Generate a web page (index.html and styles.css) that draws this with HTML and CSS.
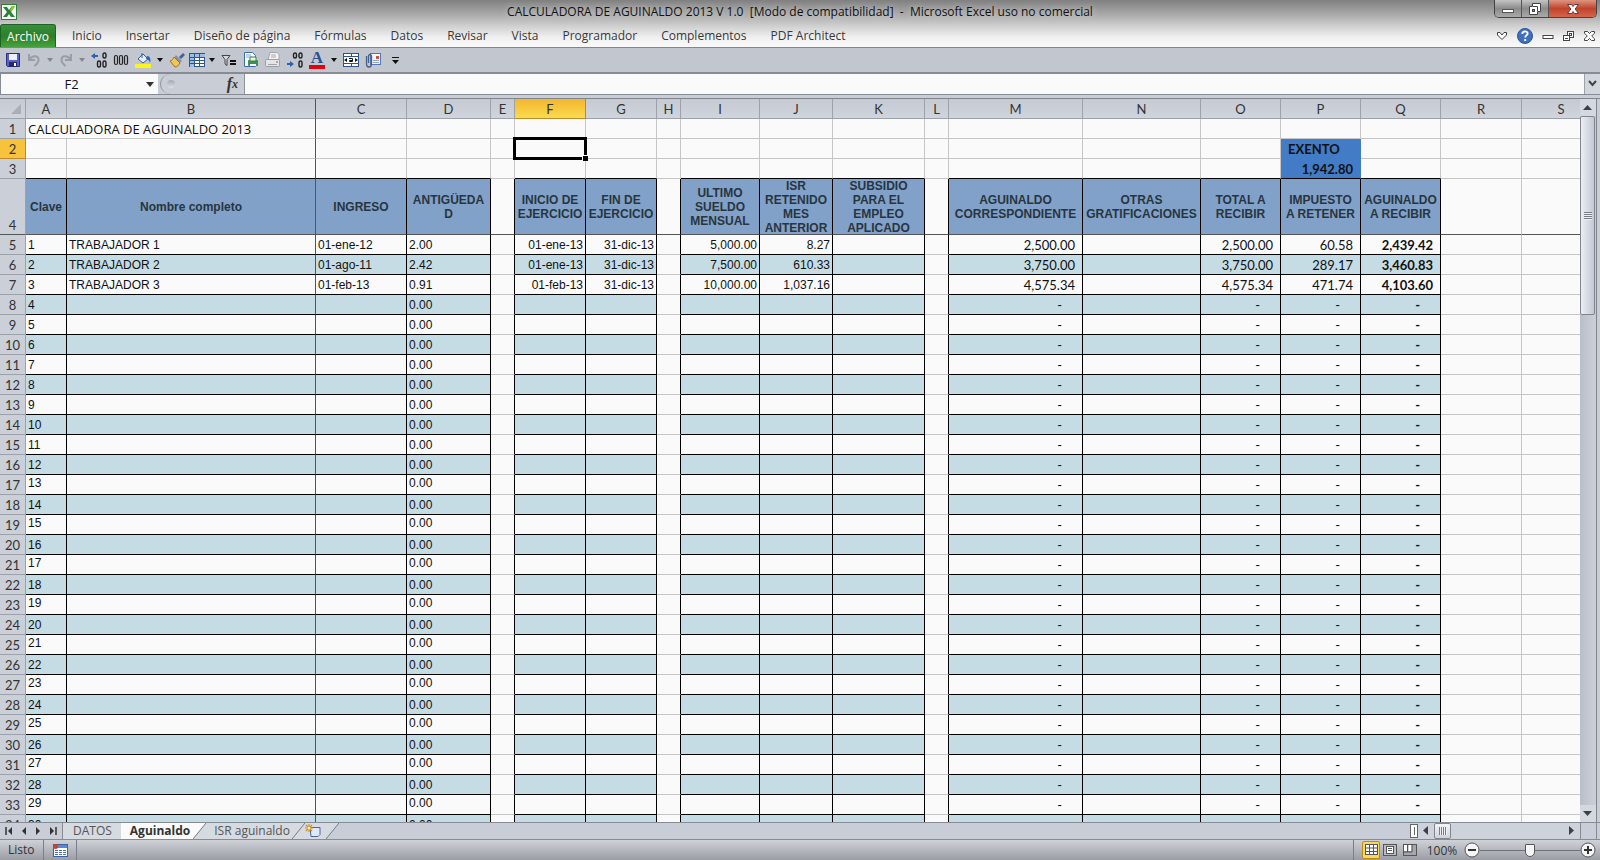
FILE: index.html
```
<!DOCTYPE html>
<html lang="es">
<head>
    <meta charset="UTF-8">
    <meta name="viewport" content="width=device-width, initial-scale=1.0">
    <title>CALCULADORA DE AGUINALDO 2013 V 1.0</title>
    <link rel="stylesheet" href="styles.css">
</head>
<body>
    <header class="top">
        <div class="titlebar">
            <svg class="app-icon" width="18" height="18" viewBox="0 0 18 18">
                <rect x="1.5" y="1.5" width="15" height="15" fill="#f4faf2" stroke="#2f7d3a"/>
                <path d="M3 4h4l2 3 3-4h3l-4 6 4 5h-4l-2-3-2 3H3l4-5z" fill="#2a8038"/>
                <path d="M12 3h3l-4 6-1-2z" fill="#8cc63f"/>
            </svg>
            <h1>CALCULADORA DE AGUINALDO 2013 V 1.0&nbsp; [Modo de compatibilidad]&nbsp; -&nbsp; Microsoft Excel uso no comercial</h1>
            <div class="window-buttons">
                <button aria-label="Minimizar"><svg width="14" height="14" viewBox="0 0 14 14"><rect x="1.5" y="7.5" width="11" height="3" fill="#fff" stroke="#555"/></svg></button>
                <button aria-label="Restaurar"><svg width="14" height="14" viewBox="0 0 14 14"><path d="M4.5 1.5h8v8h-3v3h-8v-8h3z" fill="#fff" stroke="#444"/><path d="M9.5 9V4.5H5" fill="none" stroke="#444"/><rect x="4.5" y="7.5" width="2" height="2" fill="#888" stroke="#444"/></svg></button>
                <button class="close" aria-label="Cerrar"><svg width="14" height="14" viewBox="0 0 14 14"><path d="M1.5 2.5h4L7 4.5l1.5-2h4L9.2 7l3.300 4.500h-4L7 9.500l-1.500 2h-4L4.800 7z" fill="#fff" stroke="#6a3a3a"/></svg></button>
            </div>
        </div>
        <nav class="tabs">
            <button class="file">Archivo</button>
            <button>Inicio</button>
            <button>Insertar</button>
            <button>Diseño de página</button>
            <button>Fórmulas</button>
            <button>Datos</button>
            <button>Revisar</button>
            <button>Vista</button>
            <button>Programador</button>
            <button>Complementos</button>
            <button>PDF Architect</button>
            <div class="book-buttons">
                <button aria-label="Minimizar la cinta"><svg width="12" height="12" viewBox="0 0 12 12"><path d="M1.5 2.5h2.500L6 5l2-2.500h2.500V5L6 9.500 1.500 5z" fill="#fff" stroke="#444"/></svg></button>
                <button aria-label="Ayuda"><svg width="18" height="18" viewBox="0 0 18 18"><circle cx="9" cy="9" r="7.5" fill="#3f6fbd" stroke="#2b559b"/><path d="M6.300 7c0-3.500 5.400-3.300 5.400-.5 0 1.800-2.500 1.800-2.500 4" fill="none" stroke="#fff" stroke-width="1.8"/><rect x="8.2" y="12" width="2" height="2" fill="#fff"/></svg></button>
                <button aria-label="Minimizar libro"><svg width="12" height="12" viewBox="0 0 12 12"><rect x="1" y="5.5" width="10" height="3" fill="#fff" stroke="#444"/></svg></button>
                <button aria-label="Restaurar libro"><svg width="13" height="12" viewBox="0 0 13 12"><rect x="5.5" y="1.5" width="6" height="6" fill="#fff" stroke="#444"/><rect x="7.5" y="3.5" width="2" height="2" fill="#fff" stroke="#444"/><rect x="1.5" y="5.5" width="6" height="5" fill="#fff" stroke="#444"/><path d="M3 8.5h3" stroke="#444"/></svg></button>
                <button aria-label="Cerrar libro"><svg width="13" height="12" viewBox="0 0 13 12"><path d="M1.5 1.5h3l2 2 2-2h3v1.700L8.700 6l2.800 2.800v1.700h-3l-2-2-2 2h-3V8.800L4.300 6 1.500 3.200z" fill="#fff" stroke="#444"/></svg></button>
            </div>
        </nav>
    </header>

    <div class="toolbar">
        <button class="wide" aria-label="Guardar"><svg width="16" height="16" viewBox="0 0 16 16"><path d="M1.5 1.5h13v13h-12l-1-1z" fill="#5a62c4" stroke="#2b2f86"/><rect x="4" y="2" width="8" height="6" fill="#eef0fb"/><rect x="4" y="10" width="8" height="5" fill="#23286f"/><rect x="9" y="11" width="2" height="3" fill="#fff"/></svg></button>
        <button aria-label="Deshacer"><svg width="16" height="16" viewBox="0 0 16 16"><path d="M3 2v6h6M3.500 7.500C6 3 13 3 12.500 8c0 2-1.500 4-4 6" fill="none" stroke="#9a9da6" stroke-width="2"/></svg></button>
        <button class="drop dim" aria-label="Lista deshacer"><svg width="6" height="4" viewBox="0 0 6 4"><path d="M0 0h6L3 4z"/></svg></button>
        <button aria-label="Rehacer"><svg width="16" height="16" viewBox="0 0 16 16"><path d="M13 2v6H7M12.500 7.500C10 3 3 3 3.500 8c0 2 1.500 4 4 6" fill="none" stroke="#9a9da6" stroke-width="2"/></svg></button>
        <button class="drop dim" aria-label="Lista rehacer"><svg width="6" height="4" viewBox="0 0 6 4"><path d="M0 0h6L3 4z"/></svg></button>
        <button class="wide" aria-label="Aumentar decimales"><svg width="16" height="16" viewBox="0 0 16 16"><path d="M0 4l4-3v2h3v2H4v2z" fill="#2c62b4"/><g fill="none" stroke="#222" stroke-width="1.4"><rect x="12" y="1" width="3" height="5" rx="1.5"/><rect x="6.5" y="9" width="3" height="6" rx="1.5"/><rect x="12" y="9" width="3" height="6" rx="1.5"/></g></svg></button>
        <button class="wide" aria-label="Estilo millares"><svg width="16" height="16" viewBox="0 0 16 16"><g fill="none" stroke="#222" stroke-width="1.2"><rect x="1.5" y="3.5" width="3" height="9" rx="1.5"/><rect x="6.5" y="3.5" width="3" height="9" rx="1.5"/><rect x="11.5" y="3.5" width="3" height="9" rx="1.5"/></g></svg></button>
        <button class="wide" aria-label="Color de relleno"><svg width="18" height="16" viewBox="0 0 18 16"><rect x="1" y="12" width="16" height="4" fill="#fdf51a"/><path d="M4 7l5-5 5 5-5 4z" fill="#e6edf7" stroke="#3a5f94"/><path d="M8 6V1" stroke="#3a5f94"/><path d="M13 4c3 0 4 3 3 7-1-3-2-4-4-4z" fill="#2b62b3"/></svg></button>
        <button class="drop" aria-label="Lista de colores de relleno"><svg width="6" height="4" viewBox="0 0 6 4"><path d="M0 0h6L3 4z"/></svg></button>
        <button class="wide" aria-label="Copiar formato"><svg width="16" height="16" viewBox="0 0 16 16"><path d="M10 5l4-4 2 2-4 4z" fill="#4a5b9b"/><path d="M7 3l6 6-2 2-6-5z" fill="#8c8fa8"/><path d="M5 5l6 6c-1 2-3 4-5 4L1 9c2 0 3-2 4-4z" fill="#eec65a" stroke="#9b7420"/></svg></button>
        <button class="grid-tool" aria-label="Dar formato como tabla"><svg width="16" height="16" viewBox="0 0 16 16"><rect x=".5" y="1.5" width="15" height="13" fill="#fff" stroke="#2c5688"/><path d="M1 2h15v3H1zM1 5h4v10H1z" fill="#9dbde6"/><path d="M.5 5.5h15M.5 8.500h15M.5 11.500h15M5.500 1v14M10.500 1v14" stroke="#2c5688"/></svg></button>
        <button class="drop" aria-label="Lista de tablas"><svg width="6" height="4" viewBox="0 0 6 4"><path d="M0 0h6L3 4z"/></svg></button>
        <button class="wide" aria-label="Filtro"><svg width="16" height="16" viewBox="0 0 16 16"><path d="M1 3.500h8L6 7.500v6L4 12V7.500z" fill="#d5d8de" stroke="#444"/><path d="M9 8h6v2H9zM9 11h6v2H9z" fill="#111"/></svg></button>
        <button class="wide" aria-label="Vista preliminar"><svg width="16" height="16" viewBox="0 0 16 16"><path d="M1.500.5h8l3 3v11h-11z" fill="#fff" stroke="#3c6cab"/><path d="M3 3h5M3 5h6" stroke="#7da5d8"/><rect x="5" y="8" width="10" height="6" rx="1" fill="#3f9150"/><path d="M7 5h6v4H7z" fill="#e9f5ea" stroke="#3f7f4c"/><path d="M7 12h6v2H7z" fill="#fff"/></svg></button>
        <button class="wide" aria-label="Impresión rápida"><svg width="16" height="16" viewBox="0 0 16 16"><path d="M5 .5h7l2 2V8H3z" fill="#f4f4f5" stroke="#a4a6ac"/><rect x=".5" y="7.500" width="14" height="7" rx="1" fill="#e4e5e8" stroke="#9c9ea5"/><path d="M3 12.500h9M6 3h5M6 5h5" stroke="#a4a6ac"/><circle cx="12" cy="10" r="1" fill="#cf7d78"/></svg></button>
        <button class="wide" aria-label="Disminuir decimales"><svg width="16" height="16" viewBox="0 0 16 16"><path d="M7 12l-4 3v-2H0v-2h3V9z" fill="#2c62b4"/><g fill="none" stroke="#222" stroke-width="1.4"><rect x="6.5" y="1" width="3" height="5" rx="1.5"/><rect x="12" y="1" width="3" height="5" rx="1.5"/><rect x="12" y="9" width="3" height="6" rx="1.5"/></g></svg></button>
        <button class="wide font-color" aria-label="Color de fuente">A</button>
        <button class="drop" aria-label="Lista de colores de fuente"><svg width="6" height="4" viewBox="0 0 6 4"><path d="M0 0h6L3 4z"/></svg></button>
        <button class="wide" aria-label="Combinar y centrar"><svg width="16" height="16" viewBox="0 0 16 16"><rect x=".5" y="1.5" width="15" height="13" fill="#fff" stroke="#2c5688"/><path d="M.5 4.500h15M.5 11.500h15M8.500 1v3M8.500 12v3" stroke="#2c5688"/><path d="M1 8l3-2v4zM15 8l-3-2v4z" fill="#111"/><path d="M6 6.500h3.500v3H6.500V8.500h3" fill="none" stroke="#111"/></svg></button>
        <button class="wide" aria-label="Adjuntar"><svg width="16" height="16" viewBox="0 0 16 16"><rect x="5.5" y="1.5" width="10" height="11" fill="#f1f5fc" stroke="#5478ad"/><path d="M8 10.500h6M8 8.500h6" stroke="#8aa5d0"/><rect x="11" y="4" width="3" height="3" fill="#c8554a"/><path d="M1.500 4v8c0 4 5 4 5 0V4c0-2-3-2-3 0v7" fill="none" stroke="#4b5f87" stroke-width="1.3"/></svg></button>
        <button class="wide" aria-label="Personalizar barra"><svg width="10" height="10" viewBox="0 0 10 10"><path d="M2 2.500h7" stroke="#111"/><path d="M2 5h7L5.500 9z" fill="#111"/></svg></button>
    </div>

    <div class="formula-bar">
        <input class="name-box" type="text" value="F2" aria-label="Cuadro de nombres">
        <button class="name-drop" aria-label="Lista de nombres"><svg width="8" height="5" viewBox="0 0 8 5"><path d="M0 0h8L4 5z" fill="#333"/></svg></button>
        <div class="fx">
            <span class="knob"></span>
            <button aria-label="Insertar función"><i>f</i><i class="sub">x</i></button>
        </div>
        <input class="formula" type="text" aria-label="Barra de fórmulas">
        <button class="expand" aria-label="Expandir"><svg width="9" height="8" viewBox="0 0 9 8"><path d="M1 1l3.500 4L8 1" fill="none" stroke="#444" stroke-width="2"/></svg></button>
    </div>

    <main class="sheet">
        <div class="grid-view">
            <table>
                <colgroup id="cols"></colgroup>
                <thead>
                    <tr id="letters"></tr>
                </thead>
                <tbody id="cells"></tbody>
            </table>
        </div>
        <div class="vscroll">
            <button aria-label="Subir"><svg width="10" height="6" viewBox="0 0 10 6"><path d="M0 5h9L4.500 0z" fill="#3c4048"/></svg></button>
            <div class="vthumb"><span></span></div>
            <div class="vtrack"></div>
            <button aria-label="Bajar"><svg width="10" height="6" viewBox="0 0 10 6"><path d="M0 0h9L4.500 5z" fill="#3c4048"/></svg></button>
        </div>
    </main>

    <div class="sheet-bar">
        <div class="nav-buttons">
            <button aria-label="Primera hoja"><svg width="8" height="8" viewBox="0 0 8 8"><path d="M1 0v8" stroke="#333" stroke-width="1.5"/><path d="M7 0v8L3 4z" fill="#333"/></svg></button>
            <button aria-label="Hoja anterior"><svg width="8" height="8" viewBox="0 0 8 8"><path d="M6 0v8L2 4z" fill="#333"/></svg></button>
            <button aria-label="Hoja siguiente"><svg width="8" height="8" viewBox="0 0 8 8"><path d="M2 0v8l4-4z" fill="#333"/></svg></button>
            <button aria-label="Última hoja"><svg width="8" height="8" viewBox="0 0 8 8"><path d="M7 0v8" stroke="#333" stroke-width="1.5"/><path d="M1 0v8l4-4z" fill="#333"/></svg></button>
        </div>
        <button class="sheet-tab first">DATOS</button>
        <button class="sheet-tab active">Aguinaldo</button>
        <svg width="13" height="16" viewBox="0 0 13 16"><path d="M0 0h13L0 16z" fill="#fafafa"/><path d="M13 0v16H0z" fill="#d6dae1"/><path d="M13 0L0 16" stroke="#777b84"/></svg>
        <button class="sheet-tab">ISR aguinaldo</button>
        <svg width="13" height="16" viewBox="0 0 13 16"><path d="M0 0h13v16H0z" fill="#d6dae1"/><path d="M13 0L0 16" stroke="#777b84"/></svg>
        <button class="sheet-tab new" aria-label="Insertar hoja"><svg width="16" height="14" viewBox="0 0 16 14"><path d="M5 3.500h10v7l-2 2H6z" fill="#dfe8f8" stroke="#4b6699"/><path d="M4 0v8M0 4h8M1 1l6 6M7 1L1 7" stroke="#d08a22" stroke-width="1.2"/><circle cx="4" cy="4" r="1.5" fill="#fff3b0"/></svg></button>
        <svg width="13" height="16" viewBox="0 0 13 16"><path d="M0 0h13L0 16z" fill="#d6dae1"/><path d="M13 0L0 16" stroke="#777b84"/></svg>
        <div class="hscroll">
            <span class="splitter"></span>
            <button aria-label="Izquierda"><svg width="6" height="10" viewBox="0 0 6 10"><path d="M5 0v9L0 4.500z" fill="#3c4048"/></svg></button>
            <div class="hthumb"><span></span></div>
            <div class="htrack"></div>
            <button aria-label="Derecha"><svg width="6" height="10" viewBox="0 0 6 10"><path d="M0 0v9l5-4.500z" fill="#3c4048"/></svg></button>
        </div>
        <span class="corner"></span>
    </div>

    <footer class="status">
        <span class="ready">Listo</span>
        <button class="macro" aria-label="Grabar macro"><svg width="16" height="14" viewBox="0 0 16 14"><rect x="1.5" y="1.5" width="14" height="12" fill="#fff" stroke="#3f62a3"/><path d="M2 2h13v3H2z" fill="#5c86cf"/><path d="M3 7.500h11M3 9.500h11M3 11.500h11" stroke="#4a70b5" stroke-dasharray="3 1"/><circle cx="3.5" cy="3.5" r="2.5" fill="#c4442f"/></svg></button>
        <div class="status-right">
            <button class="view on" aria-label="Normal"><svg width="13" height="12" viewBox="0 0 13 12"><rect x=".5" y=".5" width="12" height="10" fill="#fff" stroke="#555"/><path d="M0 4h13M0 7.500h13M4.500 0v11M8.500 0v11" stroke="#555"/></svg></button>
            <button class="view" aria-label="Diseño de página"><svg width="14" height="12" viewBox="0 0 14 12"><rect x=".5" y=".5" width="13" height="11" fill="#b9bcc2" stroke="#555"/><rect x="3.5" y="2.5" width="7" height="7" fill="#fff" stroke="#555"/><path d="M5 4.500h4M5 6.500h4" stroke="#555"/></svg></button>
            <button class="view" aria-label="Vista previa de salto de página"><svg width="14" height="12" viewBox="0 0 14 12"><rect x=".5" y=".5" width="13" height="11" fill="#a4a7ae" stroke="#555"/><path d="M1 1h3v6H1zM5.500 1h3v6h-3z" fill="#fff"/><path d="M4.500 0v8M9 0v8H0" fill="none" stroke="#555"/></svg></button>
            <button class="percent">100%</button>
            <button aria-label="Alejar"><svg width="16" height="16" viewBox="0 0 16 16"><circle cx="8" cy="8" r="7" fill="#f4f5f7" stroke="#555"/><path d="M4 8h8" stroke="#333" stroke-width="2"/></svg></button>
            <input class="zoom" type="range" min="0" max="100" value="50" aria-label="Zoom">
            <button aria-label="Acercar"><svg width="16" height="16" viewBox="0 0 16 16"><circle cx="8" cy="8" r="7" fill="#f4f5f7" stroke="#555"/><path d="M4 8h8M8 4v8" stroke="#333" stroke-width="2"/></svg></button>
        </div>
    </footer>

    <script>
        const letters = "ABCDEFGHIJKLMNOPQRS".split("");
        const spacers = ["E", "H", "L"];

        const headings = {
            A: "Clave", B: "Nombre completo", C: "INGRESO", D: "ANTIGÜEDA<br>D",
            F: "INICIO DE<br>EJERCICIO", G: "FIN DE<br>EJERCICIO",
            I: "ULTIMO<br>SUELDO<br>MENSUAL", J: "ISR<br>RETENIDO<br>MES<br>ANTERIOR",
            K: "SUBSIDIO<br>PARA EL<br>EMPLEO<br>APLICADO",
            M: "AGUINALDO<br>CORRESPONDIENTE", N: "OTRAS<br>GRATIFICACIONES",
            O: "TOTAL A<br>RECIBIR", P: "IMPUESTO<br>A RETENER", Q: "AGUINALDO<br>A RECIBIR"
        };

        const workers = [
            { B: "TRABAJADOR 1", C: "01-ene-12", D: "2.00", F: "01-ene-13", G: "31-dic-13", I: "5,000.00", J: "8.27", M: "2,500.00", O: "2,500.00", P: "60.58", Q: "2,439.42" },
            { B: "TRABAJADOR 2", C: "01-ago-11", D: "2.42", F: "01-ene-13", G: "31-dic-13", I: "7,500.00", J: "610.33", M: "3,750.00", O: "3,750.00", P: "289.17", Q: "3,460.83" },
            { B: "TRABAJADOR 3", C: "01-feb-13", D: "0.91", F: "01-feb-13", G: "31-dic-13", I: "10,000.00", J: "1,037.16", M: "4,575.34", O: "4,575.34", P: "471.74", Q: "4,103.60" }
        ];
        const empty = { D: "0.00", M: "-", O: "-", P: "-", Q: "-" };

        function isBoxed(l) {
            return l <= "Q" && !spacers.includes(l);
        }

        function cellClass(l, row) {
            const list = ["c-" + l.toLowerCase()];
            if (isBoxed(l) && row >= 3) list.push("line-b");
            if (l <= "Q" && row >= 4) list.push("line-r");
            if (isBoxed(l) && row === 4) list.push("heading");
            if (isBoxed(l) && row > 4 && row % 2 === 0) list.push("band");
            if (row > 4 && l >= "M") list.push("calc");
            return list.join(" ");
        }

        function buildRow(row) {
            let html = `<tr class="r${row <= 4 ? row : row >= 17 && row % 2 ? " raised" : ""}"><th scope="row">${row}</th>`;
            letters.forEach(l => {
                if (row === 1 && l === "B") return;
                let text = "", extra = "", cls = cellClass(l, row);
                if (row === 1 && l === "A") {
                    text = "CALCULADORA DE AGUINALDO 2013";
                    extra = ' colspan="2"';
                    cls += " title c-b";
                } else if (l === "P" && row === 2) {
                    text = "EXENTO";
                    cls += " exempt";
                } else if (l === "P" && row === 3) {
                    text = "1,942.80";
                    cls += " exempt amount";
                } else if (l === "F" && row === 2) {
                    cls += " selected";
                    text = '<span class="cursor"></span>';
                } else if (row === 4 && headings[l]) {
                    text = `<div>${headings[l]}</div>`;
                } else if (row > 4) {
                    const data = workers[row - 5] || empty;
                    text = l === "A" ? row - 4 : data[l] || "";
                    if (text === "-") cls += " dash";
                }
                html += `<td class="${cls}"${extra}>${text}</td>`;
            });
            return html + "</tr>";
        }

        document.getElementById("cols").innerHTML =
            '<col class="w-head">' + letters.map(l => `<col class="w-${l.toLowerCase()}">`).join("");
        document.getElementById("letters").innerHTML =
            '<th class="all"><svg width="12" height="12" viewBox="0 0 12 12"><path d="M11 1v10H1z" fill="#a9aeb7"/></svg></th>' +
            letters.map(l => `<th scope="col" class="c-${l.toLowerCase()}${l === "F" ? " current" : ""}">${l}</th>`).join("");

        let rows = "";
        for (let row = 1; row <= 34; row++) rows += buildRow(row);
        document.getElementById("cells").innerHTML = rows;
    </script>
</body>
</html>
```
FILE: styles.css
```
* { box-sizing: border-box; }
body { margin: 0; height: 100vh; display: flex; flex-direction: column; overflow: hidden; background: #c9cdd5; font-family: "Open Sans", "Noto Sans", sans-serif; font-size: 12px; color: #333; }
button { border: none; background: none; padding: 0; margin: 0; font: inherit; color: inherit; display: flex; align-items: center; justify-content: center; }
input { border: none; margin: 0; outline: none; }
svg { display: block; flex: none; }

/* title and ribbon */
.top { flex: none; border-bottom: 1px solid #80858e; background: linear-gradient(#808080 0, #a8a8a8 30%, #cfcfcf 55%, #f0f0f0 80%, #fafafa 100%); }
.titlebar { display: flex; justify-content: space-between; align-items: flex-start; height: 24px; padding: 0 3px 0 0; }
.app-icon { margin-top: 3px; }
h1 { flex: 1; margin: 0; padding-left: 88px; font-size: 12px; font-weight: normal; line-height: 24px; color: #111; text-align: center; white-space: nowrap; text-shadow: 0 0 6px #ddd; }
.window-buttons { display: flex; height: 18px; border: 1px solid #444; border-top: none; border-radius: 0 0 5px 5px; overflow: hidden; }
.window-buttons button { width: 27px; background: linear-gradient(#c4c4c4, #8b8b8b 50%, #a9a9a9); border-right: 1px solid #555; }
.window-buttons .close { width: 47px; background: linear-gradient(#dd9580, #c0432b 50%, #d4654b); border: none; }
.tabs { display: flex; height: 23px; }
.tabs > button { padding: 0 12px; color: #383838; white-space: nowrap; }
.tabs .file { width: 56px; padding: 0; margin-right: 4px; color: #fff; background: linear-gradient(#3c8f3a, #2a7f2b 50%, #46a33c); border: 1px solid #1d6424; border-bottom: none; border-radius: 3px 3px 0 0; }
.book-buttons { display: flex; align-items: center; gap: 8px; margin-left: auto; padding-right: 4px; }

/* quick access toolbar */
.toolbar { flex: none; display: flex; height: 26px; padding: 0 2px; background: #c2c6ce; border-bottom: 2px solid #868b94; }
.toolbar button { width: 20px; }
.toolbar .wide { width: 22px; }
.toolbar .drop { width: 12px; fill: #111; }
.toolbar .dim { fill: #83868e; }
.toolbar .grid-tool { width: 18px; }
.toolbar .font-color { width: 16px; height: 18px; margin: 3px 3px 0; border-bottom: 4px solid #e3000f; font-family: "Liberation Serif", serif; font-size: 17px; font-weight: bold; line-height: 14px; color: #2d4f8f; }

/* formula bar */
.formula-bar { flex: none; display: flex; height: 21px; background: #c9cdd5; border-bottom: 1px solid #868b94; }
.name-box { width: 142px; padding: 0; text-align: center; font-family: "Open Sans", sans-serif; font-size: 13px; color: #111; background: #fafafa; border-left: 1px solid #868b94; }
.name-drop { width: 16px; background: #fafafa; }
.fx { display: flex; justify-content: space-between; align-items: center; width: 85px; margin-left: 2px; padding: 0 6px; border: 1px solid #8d929b; border-width: 0 1px; border-radius: 10px 0 0 10px; }
.knob { width: 8px; height: 8px; border-radius: 50%; background: linear-gradient(#a5a9b1, #dcdfe4); }
.fx i { font-family: "Liberation Serif", serif; font-size: 16px; font-weight: bold; line-height: 18px; color: #333; }
.fx .sub { font-size: 12px; }
.formula { flex: 1; min-width: 0; background: #fafafa; }
.expand { width: 16px; border-left: 1px solid #9ca1aa; background: #d2d6dd; }

/* grid */
.sheet { flex: 1; min-height: 0; display: flex; margin-top: 3px; border-top: 1px solid #80858e; padding-right: 3px; }
.grid-view { flex: 1; min-width: 0; overflow: hidden; background: #fafafa; }
table { width: 100%; table-layout: fixed; border-collapse: separate; border-spacing: 0; }
.w-head { width: 26px; }
.w-a { width: 41px; }
.w-b { width: 249px; }
.w-c { width: 91px; }
.w-d { width: 84px; }
.w-e, .w-h, .w-l { width: 24px; }
.w-f, .w-g { width: 71px; }
.w-i { width: 79px; }
.w-j { width: 73px; }
.w-k { width: 92px; }
.w-m { width: 134px; }
.w-n { width: 118px; }
.w-o, .w-p, .w-q { width: 80px; }
.w-r { width: 81px; }
th { height: 20px; padding: 1px 0 0; font-family: Lato, sans-serif; font-size: 13px; font-weight: normal; line-height: 18px; color: #333; background: #cacfd8; border-right: 1px solid #9ca1aa; border-bottom: 1px solid #9ca1aa; }
thead th { background: linear-gradient(#c5cad3, #d0d4dc); }
thead .c-s { padding-left: 20px; border-right: none; }
thead .current { background: linear-gradient(#f3b62f, #fbdb4e); border-color: #c08a2b; }
.all svg { margin-left: 10px; }
td { height: 20px; padding: 2px 2px 0; overflow: hidden; white-space: nowrap; font-family: "Liberation Sans", Arial, sans-serif; font-size: 12px; line-height: 17px; color: #111; border-right: 1px solid #c6c6c6; border-bottom: 1px solid #c6c6c6; }
td.line-b { border-bottom-color: #000; }
td.line-r { border-right-color: #000; }
.c-b { border-right-color: #555; }
td.c-b { border-right-color: #555; }
td.c-s { border-right: none; }
.band { background: #c5dce4; }
.r2 th { background: #f7c33c; border-color: #c08a2b; }
.r4 th { height: 56px; vertical-align: bottom; }
.r4 td, .r4 th { border-bottom-color: #555; }
.heading { padding: 0; background: #82a1c8; font-weight: bold; line-height: 14px; text-align: center; color: #27353f; }
.heading div { display: flex; flex-direction: column; justify-content: center; height: 55px; }
.title { font-family: "Open Sans", sans-serif; font-size: 13px; }
.c-f, .c-g, .c-i, .c-j, .calc { text-align: right; }
th.c-f, th.c-g, th.c-i, th.c-j, .heading { text-align: center; }
.calc, .exempt { padding: 2px 7px 0; font-family: Lato, sans-serif; font-size: 13px; }
.calc.c-q { font-weight: bold; }
.calc.dash { padding-right: 20px; }
.exempt { background: #427bc6; border-color: #427bc6; font-weight: bold; }
.amount { text-align: right; }
.raised .c-a, .raised .c-d { line-height: 13px; vertical-align: top; }
.selected { position: relative; overflow: visible; }
.cursor { position: absolute; inset: -2px; border: 3px solid #000; }
.cursor::after { content: ""; position: absolute; right: -4px; bottom: -4px; width: 5px; height: 5px; background: #000; border: 1px solid #fafafa; border-width: 1px 0 0 1px; }

/* scroll bars */
.vscroll { width: 17px; display: flex; flex-direction: column; background: #c3c9d2; border-right: 1px solid #80858e; }
.vscroll button { height: 17px; background: #d4d8df; }
.vthumb { flex: 0 0 199px; display: flex; align-items: center; justify-content: center; width: 15px; background: linear-gradient(to right, #eceef3, #c3c8d4); border: 1px solid #80858e; border-radius: 2px; }
.vthumb span { width: 8px; height: 8px; background: repeating-linear-gradient(#777c86 0 1px, #eef0f4 1px 2px); }
.vtrack { flex: 1; background: linear-gradient(to right, #b9bfc9, #cbd0d8); }

/* sheet tabs */
.sheet-bar { flex: none; display: flex; height: 17px; padding-right: 3px; background: #c9cdd7; border-top: 1px solid #868b94; }
.nav-buttons { display: flex; align-items: center; justify-content: space-around; width: 62px; padding: 0 2px; }
.nav-buttons button { width: 14px; }
.sheet-tab { padding: 0 2px 0 8px; font-size: 12px; line-height: 16px; color: #555; background: #d6dae1; white-space: nowrap; }
.sheet-tab.first { padding: 0 9px 0 10px; border-left: 1px solid #868b94; }
.sheet-tab.active { padding: 0 3px 0 9px; font-weight: bold; color: #333; background: #fafafa; }
.sheet-tab.new { padding: 0 5px 0 0; }
.hscroll { display: flex; align-items: center; width: 170px; margin-left: auto; background: #ced2da; }
.hscroll button { width: 16px; height: 16px; }
.splitter { width: 8px; height: 14px; border: 1px solid #666; background: linear-gradient(#666, #666) center / 1px 8px no-repeat #fff; }
.hthumb { display: flex; align-items: center; justify-content: center; width: 17px; height: 16px; border: 1px solid #80858e; border-radius: 2px; background: linear-gradient(#f3f4f7, #cfd3dc); }
.hthumb span { width: 8px; height: 8px; background: repeating-linear-gradient(to right, #777c86 0 1px, #eef0f4 1px 2px); }
.htrack { flex: 1; }
.corner { width: 17px; border: 1px solid #868b94; border-width: 0 1px; }

/* status bar */
.status { flex: none; display: flex; align-items: center; height: 21px; border-top: 1px solid #868b94; background: linear-gradient(#cfd2d7, #b4b7bd 50%, #9a9da3); }
.ready { padding: 0 8px; border-right: 1px solid #7a7e86; font-size: 12px; line-height: 20px; }
.macro { height: 20px; padding: 0 8px; border-right: 1px solid #7a7e86; }
.status-right { display: flex; align-items: center; margin-left: auto; height: 20px; padding: 0 4px; border-left: 1px solid #7a7e86; }
.view { width: 20px; height: 18px; }
.view.on { width: 18px; margin-left: 4px; border: 1px solid #b98a1c; border-radius: 2px; background: #fbd75b; }
.percent { width: 44px; }
.zoom { appearance: none; width: 100px; height: 16px; background: linear-gradient(#6d7179, #6d7179) center / 100% 1px no-repeat; }
.zoom::-webkit-slider-thumb { appearance: none; width: 10px; height: 13px; background: #f4f5f7; border: 1px solid #555; border-radius: 1px 1px 5px 5px; }
```
